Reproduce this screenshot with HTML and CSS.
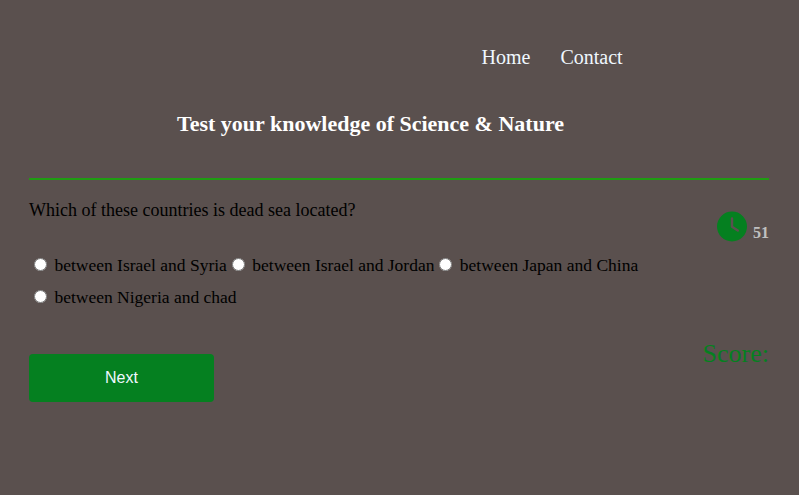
FILE: index.html
```html
<!DOCTYPE html>
<html lang="en">
<head>
<meta charset="utf-8">
<title>Quiz</title>
<link rel="stylesheet" href="styles.css">
</head>
<body>
<nav class="nav"><a href="#">Home</a><a href="#">Contact</a></nav>
<h1 class="title">Test your knowledge of Science &amp; Nature</h1>
<main class="quiz">
  <section class="content">
    <p class="question">Which of these countries is dead sea located?</p>
    <div class="options">
      <label><input type="radio" name="answer"> between Israel and Syria</label><label><input type="radio" name="answer"> between Israel and Jordan</label><label><input type="radio" name="answer"> between Japan and China</label><br><label><input type="radio" name="answer"> between Nigeria and chad</label>
    </div>
    <button class="next" type="button">Next</button>
  </section>
  <aside class="status">
    <div class="timer">
      <svg class="clock" viewBox="0 0 30 30" aria-hidden="true"><circle class="face" cx="15" cy="15" r="15"/><path class="hands" d="M15 7v8.200l5.800 3.900"/></svg>
      <span class="seconds">51</span>
    </div>
    <p class="score">Score:</p>
  </aside>
</main>
</body>
</html>
```
FILE: styles.css
```css
body {
  margin: 0;
  background: #5a504e;
  color: #000;
  font-family: "Liberation Serif", "Times New Roman", serif;
  font-size: 18px;
}

.nav {
  display: flex;
  gap: 30px;
  padding: 46px 0 0 481.5px;
  font-size: 20px;
  line-height: 23px;
}

.nav a {
  color: #f0f8ff;
  text-decoration: none;
}

.title {
  margin: 42px 0 0 177px;
  color: #fff;
  font-size: 22px;
  line-height: 25px;
  white-space: nowrap;
}

.quiz {
  display: flex;
  justify-content: space-between;
  margin: 42px 30px 0 29px;
  border-top: 2px solid #1f9c12;
}

.content {
  flex: none;
}

.question {
  margin: 20px 0 29px;
  line-height: 20px;
}

.options {
  font-size: 17.5px;
  line-height: 32px;
  white-space: nowrap;
}

.next {
  display: block;
  width: 185px;
  height: 48px;
  margin-top: 41px;
  border: 0;
  border-radius: 4px;
  background: #058020;
  color: #f0f8ff;
  font: 16px "Liberation Sans", Arial, sans-serif;
}

.status {
  padding-top: 31px;
}

.timer {
  display: flex;
  justify-content: flex-end;
  gap: 6px;
}

.clock {
  width: 30px;
  height: 31px;
}

.face {
  fill: #058020;
}

.hands {
  fill: none;
  stroke: #5a504e;
  stroke-width: 2.4;
  stroke-linecap: round;
  stroke-linejoin: round;
}

.seconds {
  padding-top: 12px;
  color: #c0c0c0;
  font-size: 16px;
  font-weight: bold;
  line-height: 19px;
}

.score {
  margin: 97px 0 0;
  color: #058020;
  font-size: 26px;
  line-height: 30px;
}
```
